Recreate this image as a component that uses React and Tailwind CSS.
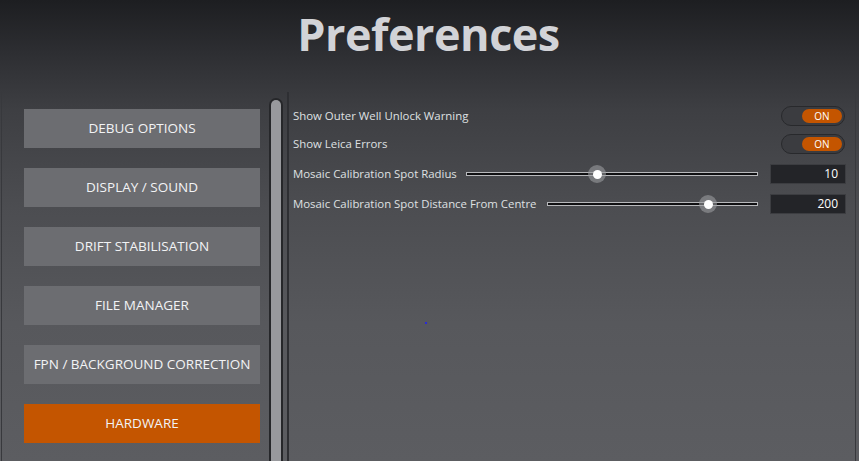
import React from "react";

const buttons = [
  "DEBUG OPTIONS",
  "DISPLAY / SOUND",
  "DRIFT STABILISATION",
  "FILE MANAGER",
  "FPN / BACKGROUND CORRECTION",
  "HARDWARE",
];

function Toggle() {
  return (
    <div className="w-[64px] h-[20px] rounded-full bg-[#3b3c40] border border-[#28292c] flex items-center justify-end pr-[2px]">
      <div className="w-[40px] h-[14px] rounded-full bg-[#c45500] flex items-center justify-center text-[10px] leading-none text-white">
        ON
      </div>
    </div>
  );
}

function Slider({ pct }) {
  return (
    <div className="relative flex-1 h-[16px] flex items-center">
      <div className="w-full h-[4px] bg-[#101012] border border-[#b8b9bc]" />
      <div
        className="absolute top-1/2 -translate-x-1/2 -translate-y-1/2 w-[18px] h-[18px] rounded-full bg-[#9a9b9f]/60 flex items-center justify-center"
        style={{ left: `${pct}%` }}
      >
        <div className="w-[9px] h-[9px] rounded-full bg-white" />
      </div>
    </div>
  );
}

function NumBox({ v }) {
  return (
    <div className="w-[76px] h-[20px] bg-[#232428] border border-[#3c3d41] text-right pr-[7px] text-[12px] leading-[18px] text-white">
      {v}
    </div>
  );
}

export default function App() {
  return (
    <div
      className="w-[859px] h-[461px] overflow-hidden relative flex flex-col bg-[linear-gradient(to_bottom,#1d1e21_0%,#2e2f33_12%,#3e3f43_24%,#4c4d51_45%,#57585c_70%,#5c5d61_100%)]"
      style={{ fontFamily: '"Open Sans", "Noto Sans", sans-serif' }}
    >
      <div className="h-[92px] flex justify-center pt-[2px]">
        <h1 className="text-[45px] font-bold text-[#d2d3d7] leading-[64px] tracking-[-0.5px] -translate-x-[1px]">
          Preferences
        </h1>
      </div>
      <div className="flex flex-1 min-h-0 pl-[1px]">
        <div className="w-[268px] border-l border-[#38393d] pl-[22px] pr-[9px] pt-[17px] flex flex-col gap-[20px]">
          {buttons.map((b) => (
            <div
              key={b}
              className={`h-[39px] shrink-0 flex items-center justify-center text-[13.5px] text-[#f2f3f5] ${
                b === "HARDWARE" ? "bg-[#c45500]" : "bg-[#6c6d71]"
              }`}
            >
              {b}
            </div>
          ))}
        </div>
        <div className="w-[18px] flex pt-[6px]">
          <div className="w-[14px] h-full rounded-t-full bg-[#26272a] p-[2px] pb-0">
            <div className="w-full h-full rounded-t-full bg-[#98999d]" />
          </div>
          <div className="w-[4px]" />
        </div>
        <div className="flex-1 border-l-2 border-[#2e2f33] border-r border-r-[#38393d] mr-[3px] pl-[4px] pr-[9px] pt-[14px] flex flex-col text-[11.4px] text-[#dfe0e2]">
          <div className="h-[20px] flex items-center justify-between">
            <span>Show Outer Well Unlock Warning</span>
            <div className="-translate-x-[1px]">
              <Toggle />
            </div>
          </div>
          <div className="h-[20px] mt-[8px] flex items-center justify-between">
            <span>Show Leica Errors</span>
            <div className="-translate-x-[1px]">
              <Toggle />
            </div>
          </div>
          <div className="h-[20px] mt-[10px] flex items-center">
            <span className="mr-[9px]">Mosaic Calibration Spot Radius</span>
            <Slider pct={45} />
            <div className="w-[12px]" />
            <NumBox v="10" />
          </div>
          <div className="h-[20px] mt-[10px] flex items-center">
            <span className="mr-[10px]">Mosaic Calibration Spot Distance From Centre</span>
            <Slider pct={76.5} />
            <div className="w-[12px]" />
            <NumBox v="200" />
          </div>
        </div>
      </div>
      <div className="absolute left-[425px] top-[322px] w-[2px] h-[2px] bg-[#2a2ad8]" />
    </div>
  );
}
